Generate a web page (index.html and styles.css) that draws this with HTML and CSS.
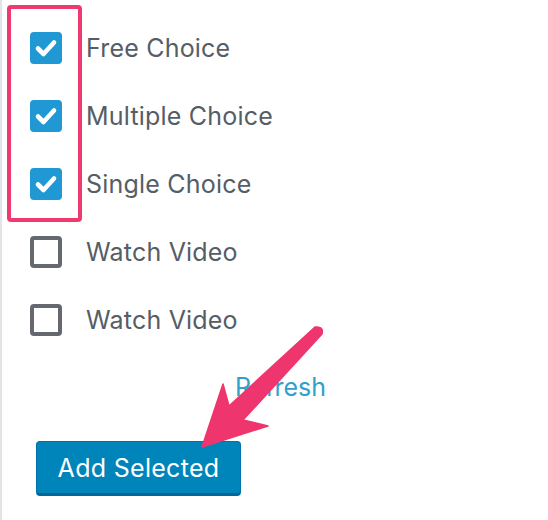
FILE: index.html
```html
<!DOCTYPE html>
<html>
<head>
<meta charset="utf-8">
<link rel="stylesheet" href="styles.css">
</head>
<body>
<div class="panel">
  <ul class="choices">
    <li class="item"><span class="box checked"><svg viewBox="0 0 32 32" width="32" height="32"><path d="M8 16.5 L13.5 22 L24 10.5" fill="none" stroke="#fff" stroke-width="4.6" stroke-linecap="round" stroke-linejoin="round"/></svg></span><span class="label">Free Choice</span></li>
    <li class="item"><span class="box checked"><svg viewBox="0 0 32 32" width="32" height="32"><path d="M8 16.5 L13.5 22 L24 10.5" fill="none" stroke="#fff" stroke-width="4.6" stroke-linecap="round" stroke-linejoin="round"/></svg></span><span class="label">Multiple Choice</span></li>
    <li class="item"><span class="box checked"><svg viewBox="0 0 32 32" width="32" height="32"><path d="M8 16.5 L13.5 22 L24 10.5" fill="none" stroke="#fff" stroke-width="4.6" stroke-linecap="round" stroke-linejoin="round"/></svg></span><span class="label">Single Choice</span></li>
    <li class="item"><span class="box"></span><span class="label">Watch Video</span></li>
    <li class="item"><span class="box"></span><span class="label">Watch Video</span></li>
  </ul>
  <div class="refresh-row"><a class="refresh">Refresh</a></div>
  <div class="actions"><button class="add-btn">Add Selected</button></div>
  <div class="highlight"></div>
  <svg class="arrow" width="548" height="520" viewBox="0 0 548 520">
    <path d="M202 447 L268 426 L243 420 L322 334 Q324 326 315 327 L229 406 L223 384 Z" fill="#ef356d" stroke="#ef356d" stroke-width="1.5" stroke-linejoin="round"/>
  </svg>
</div>
</body>
</html>
```
FILE: styles.css
```css
html, body {
  margin: 0;
  padding: 0;
  background: #fff;
}
.panel {
  position: relative;
  width: 548px;
  height: 520px;
  box-sizing: border-box;
  border-left: 2px solid #e2e4e7;
  font-family: Inter, "Noto Sans", sans-serif;
  overflow: hidden;
}
.choices {
  list-style: none;
  margin: 0;
  padding: 32px 0 0 28px;
  display: flex;
  flex-direction: column;
  gap: 36px;
}
.item {
  display: flex;
  align-items: center;
  height: 32px;
}
.box {
  width: 32px;
  height: 32px;
  box-sizing: border-box;
  border: 4px solid #646970;
  border-radius: 4px;
  margin-right: 24px;
  flex: none;
}
.box.checked {
  border: none;
  background: #1f98d3;
}
.box svg {
  display: block;
}
.label {
  font-size: 25px;
  color: #555d66;
  letter-spacing: 0.2px;
}
.refresh-row {
  margin-top: 35px;
  padding-left: 233px;
  height: 32px;
  line-height: 32px;
}
.refresh {
  font-size: 25px;
  color: #2ea2cc;
}
.actions {
  margin-top: 38px;
  padding-left: 34px;
}
.add-btn {
  width: 205px;
  height: 55px;
  background: #0085ba;
  border: 1px solid #0073aa;
  border-bottom: 3px solid #006799;
  border-radius: 4px;
  color: #fff;
  font-family: Inter, "Noto Sans", sans-serif;
  font-size: 25px;
  letter-spacing: 0.3px;
  padding: 0;
}
.highlight {
  position: absolute;
  left: 5px;
  top: 5px;
  width: 75px;
  height: 217px;
  box-sizing: border-box;
  border: 4px solid #ee3a6f;
  border-radius: 4px;
}
.arrow {
  position: absolute;
  left: -2px;
  top: 0;
}
```
